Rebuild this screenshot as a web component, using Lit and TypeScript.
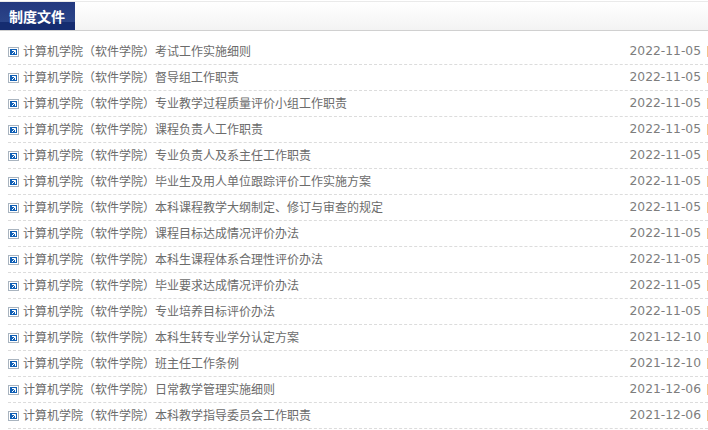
import { LitElement, html, css } from "lit";
import { customElement } from "lit/decorators.js";

const rows: [string, string][] = [
  ["考试工作实施细则", "2022-11-05"],
  ["督导组工作职责", "2022-11-05"],
  ["专业教学过程质量评价小组工作职责", "2022-11-05"],
  ["课程负责人工作职责", "2022-11-05"],
  ["专业负责人及系主任工作职责", "2022-11-05"],
  ["毕业生及用人单位跟踪评价工作实施方案", "2022-11-05"],
  ["本科课程教学大纲制定、修订与审查的规定", "2022-11-05"],
  ["课程目标达成情况评价办法", "2022-11-05"],
  ["本科生课程体系合理性评价办法", "2022-11-05"],
  ["毕业要求达成情况评价办法", "2022-11-05"],
  ["专业培养目标评价办法", "2022-11-05"],
  ["本科生转专业学分认定方案", "2021-12-10"],
  ["班主任工作条例", "2021-12-10"],
  ["日常教学管理实施细则", "2021-12-06"],
  ["本科教学指导委员会工作职责", "2021-12-06"],
];

@customElement("app-root")
export class AppRoot extends LitElement {
  static styles = css`
    :host { display: block; width: 708px; height: 430px; overflow: hidden; background: #fff;
      font-family: "Noto Sans CJK SC", sans-serif; }
    .head { height: 28px; margin-top: 1px; border-bottom: 1px solid #d0d0d0; border-top: 1px solid #eaeaea;
      background: linear-gradient(#ffffff, #f3f3f3); display: flex; }
    .tab { width: 75px; height: 28px; box-sizing: border-box; padding-left: 9px;
      background: linear-gradient(#23397f 0, #2b4488 70%, #152c70 72%, #152c70 100%);
      color: #fff; font-size: 14px; font-weight: 700; line-height: 28px; }
    .list { margin: 8px 0 0 8px; padding: 0; list-style: none; }
    .row { position: relative; height: 25px; border-bottom: 1px dashed #dcdcdc; display: flex; align-items: center;
      font-size: 12px; color: #6b6b6b; }
    .ico { width: 11px; height: 10px; flex: none; margin: 1px 4px 0 0; display: block; }
    .t { flex: 1; white-space: nowrap; margin-top: -2px; }
    .d { font-family: "DejaVu Sans", sans-serif; font-size: 12.3px; color: #7d7d7d; margin: -2px 7px 0 0; }
    .bar { position: absolute; right: 0; top: 7px; width: 1px; height: 11px; background: #f6c48c; }
  `;
  render() {
    return html`
      <div class="head"><div class="tab">制度文件</div></div>
      <ul class="list">
        ${rows.map(([t, d]) => html`
          <li class="row">
            <svg class="ico" width="11" height="10" viewBox="0 0 11 10" aria-hidden="true">
              <rect x="0.5" y="0.5" width="10" height="9" fill="#fff" stroke="#a9b4bf"/>
              <rect x="2" y="2" width="7" height="6" fill="#0f5fb5"/>
              <path d="M4 3.5H7.5V7M7.3 3.7L4 7" fill="none" stroke="#fff" stroke-width="1"/>
            </svg>
            <span class="t">计算机学院（软件学院）${t}</span>
            <span class="d">${d}</span>
            <span class="bar"></span>
          </li>`)}
      </ul>
    `;
  }
}
